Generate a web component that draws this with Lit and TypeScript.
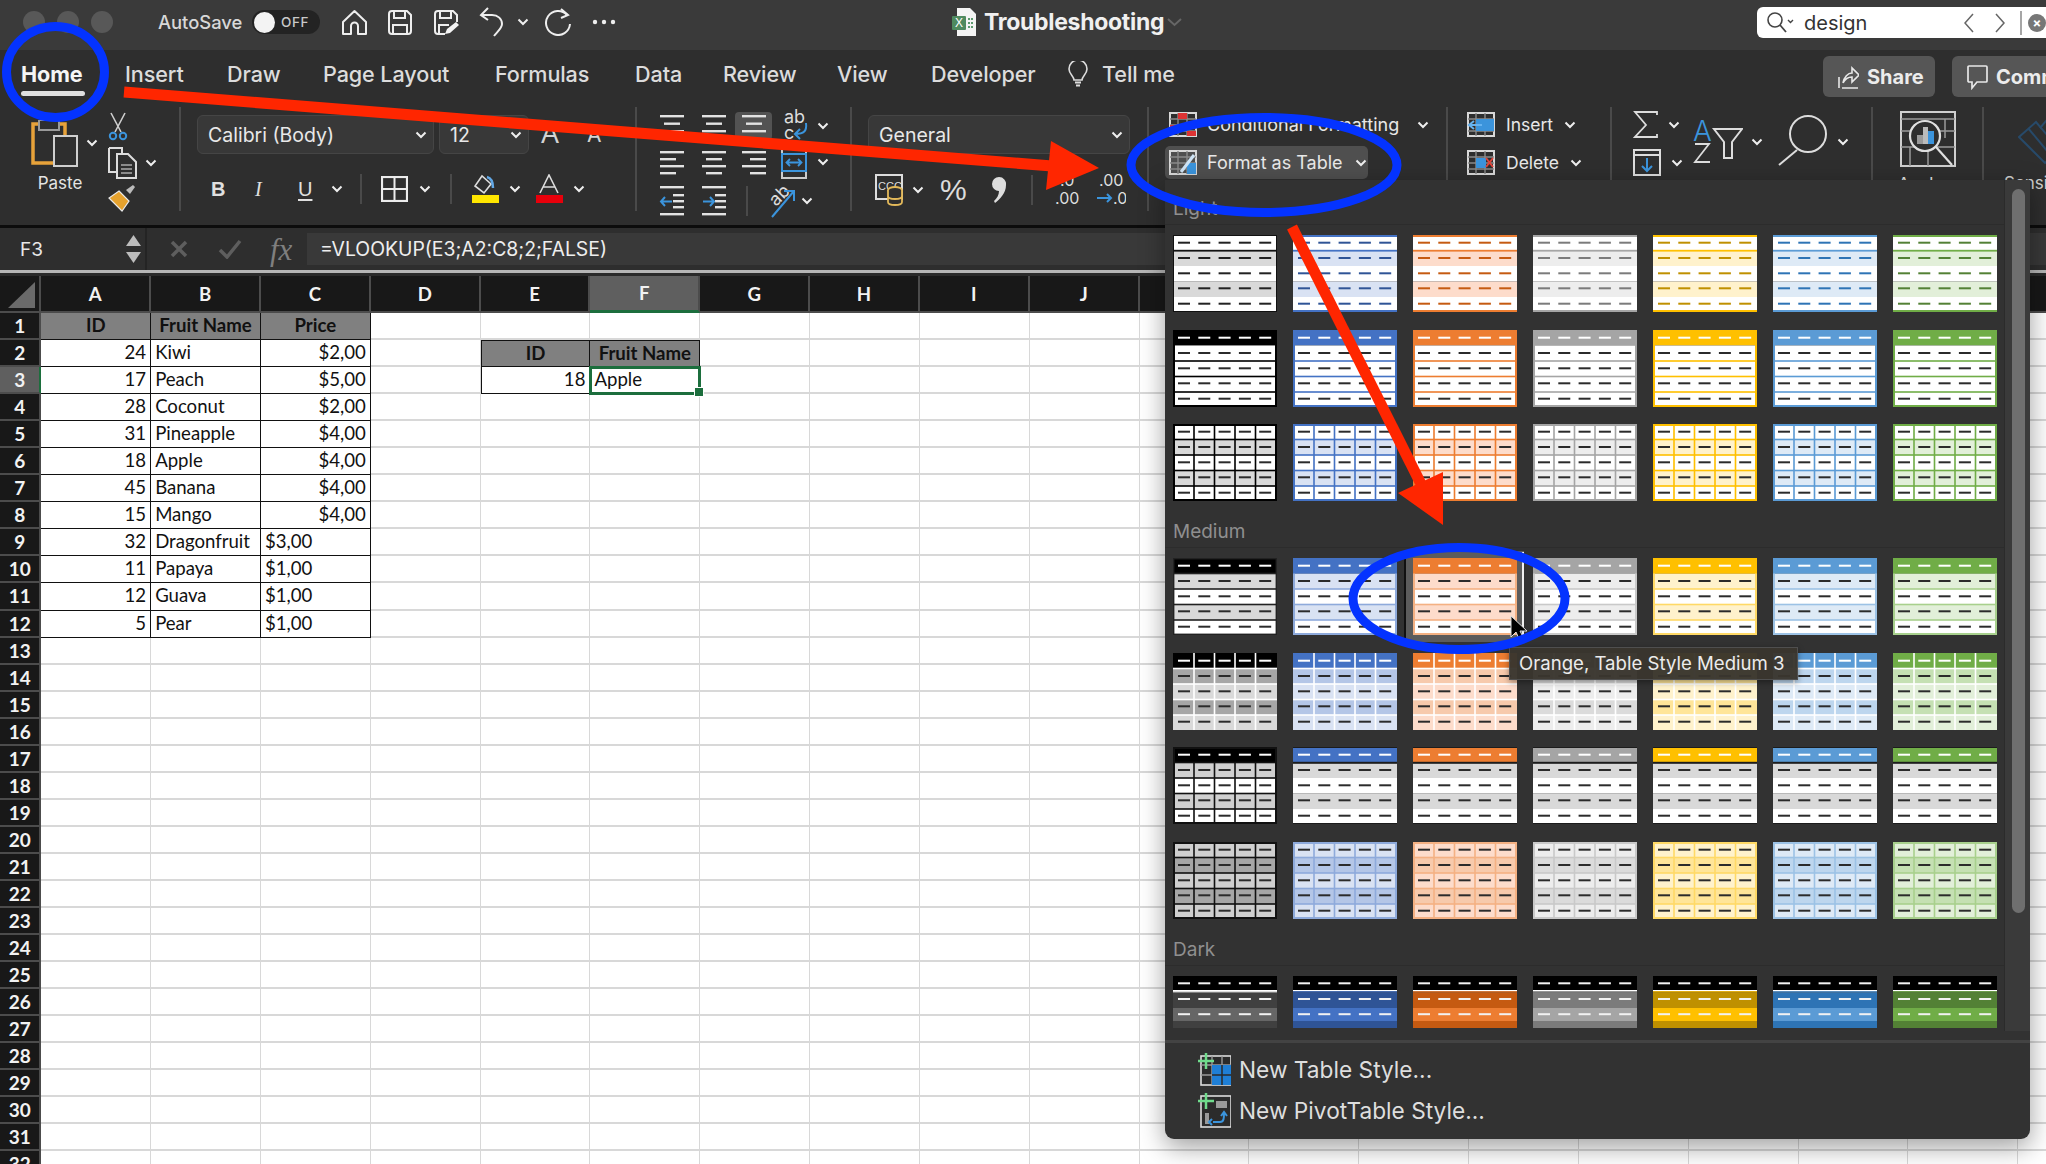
import { LitElement, html, css, svg } from "lit";
import { customElement } from "lit/decorators.js";

const W = "#e2e2e2";
const B = "#3b94dc";
const chev = html`<svg class="chev" width="12" height="8" viewBox="0 0 12 8"><path d="M1.5 1.5 6 6l4.5-4.5" fill="none" stroke="#eee" stroke-width="2"/></svg>`;

const lineIcon = (rows: [number, number][], w = 26, extra: any = null) => html`<svg width=${w} height="25" viewBox="0 0 ${w} 25">
  ${rows.map((r, i) => svg`<rect x=${r[0]} y=${1 + i * (rows.length === 3 ? 7.5 : 7)} width=${r[1]} height="2.4" fill=${W}/>`)}${extra}</svg>`;

const gridIcon = (extra: any, w = 28, h = 25) => html`<svg width=${w} height=${h} viewBox="0 0 28 25">
  <rect x="1" y="1" width="26" height="23" fill="none" stroke="#d8d8d8" stroke-width="2"/>
  <path d="M1 7h26M1 13h26M1 19h26M9 1v23M18 1v23" stroke="#8a8a8a" stroke-width="1.4"/>${extra}</svg>`;

@customElement("table-thumb")
class TableThumb extends LitElement {
  static properties = { kind: {}, idx: { type: Number } };
  kind = "L1";
  idx = 0;
  static styles = css`
    :host { display: block; width: 104px; height: 77px; }
    :host([kind="D"]) { height: 52px; }
    svg { display: block; }
  `;
  render() {
    const P = [
      ["#000000", "#000000", "#d9d9d9", "#a6a6a6", "#555555"],
      ["#4472c4", "#2f5496", "#d9e2f3", "#b4c6e7", "#8eaadb"],
      ["#ed7d31", "#c55a11", "#fddccb", "#f7caac", "#f4b183"],
      ["#a5a5a5", "#7b7b7b", "#ededed", "#dbdbdb", "#c9c9c9"],
      ["#ffc000", "#bf9000", "#fff2cc", "#ffe599", "#ffd966"],
      ["#5b9bd5", "#2e74b5", "#deeaf6", "#bdd6ee", "#9cc2e5"],
      ["#70ad47", "#538135", "#e2efd9", "#c5e0b3", "#a8d08d"],
    ][this.idx];
    const [c, dk, lt, md, ln] = P;
    const ys = [0, 15.5, 31, 46.5, 62, 77];
    const xs = [21, 41.5, 62, 82.5];
    const dy = [7.7, 23, 38.3, 53.3, 68.7];
    const dx = [5, 25.3, 45.6, 65.9, 86.2];
    const R = (x: number, y: number, w: number, h: number, f: string) => svg`<rect x=${x} y=${y} width=${w} height=${h} fill=${f}/>`;
    const dashes = (colors: string[]) =>
      dy.map((y, r) => dx.map((x) => R(x, y - 1, 12, 2, colors[r])));
    const band = (fills: string[]) => fills.map((f, i) => R(0, ys[i], 104, ys[i + 1] - ys[i], f));
    const hLines = (col: string, t = 1.6, a = 1) => ys.slice(a, 5).map((y) => R(0, y - t / 2, 104, t, col));
    const vLines = (col: string, t = 1.6, from = 0) => xs.map((x) => R(x - t / 2, from, t, 77 - from, col));
    const frame = (col: string, t = 2) => [R(0, 0, 104, t, col), R(0, 77 - t, 104, t, col), R(0, 0, t, 77, col), R(104 - t, 0, t, 77, col)];
    const k = this.kind;
    let body: any[] = [];
    const text = "#2b2b2b";
    if (k === "L1") {
      body = [band(["#fff", lt, "#fff", lt, "#fff"]), R(0, 0, 104, 2, c), R(0, 14.8, 104, 1.8, c), R(0, 75, 104, 2, c), dashes([dk, dk, dk, dk, dk])];
      if (this.idx === 0) body = [band(["#fff", lt, "#fff", lt, "#fff"]), R(0, 14.8, 104, 1.8, "#111"), frame("#111", 1), dashes(Array(5).fill("#222"))];
    } else if (k === "L2") {
      body = [band([c, "#fff", "#fff", "#fff", "#fff"]), hLines(c, 1.6, 2), frame(c), dashes(["#fff", text, text, text, text])];
    } else if (k === "L3") {
      body = [band(["#fff", lt, "#fff", lt, "#fff"]), hLines(c, 1.6), vLines(c), frame(c), dashes(Array(5).fill(text))];
    } else if (k === "M1") {
      const l = this.idx === 0 ? "#333" : ln;
      body = [band([c, lt, "#fff", lt, "#fff"]), hLines(l, 1.6, 2), frame(l), R(0, 0, 104, 15.5, c), dashes(["#fff", text, text, text, text])];
      if (this.idx === 0) body = [band([c, lt, "#fff", lt, "#fff"]), hLines("#222", 1.6, 1), frame("#222", 1.4), dashes(["#fff", text, text, text, text])];
    } else if (k === "M2") {
      body = [band([c, md, lt, md, lt]), hLines("#fff", 1.6), vLines("#fff", 1.6), dashes(["#fff", text, text, text, text])];
    } else if (k === "M3") {
      if (this.idx === 0) {
        body = [band(["#000", "#d0d0d0", "#fff", "#d0d0d0", "#fff"]), hLines("#111", 1.6), vLines("#111", 1.6, 15), frame("#111"), dashes(["#fff", text, text, text, text])];
      } else {
        body = [band([c, "#d9d9d9", "#fff", "#d9d9d9", "#fff"]), R(0, 14.8, 104, 2, "#1c1c1c"), R(0, 0, 104, 1, "#1c1c1c"), R(0, 76, 104, 1, "#1c1c1c"), dashes(["#fff", text, text, text, text])];
      }
    } else if (k === "M4") {
      if (this.idx === 0) {
        body = [band(["#cfcfcf", "#a6a6a6", "#cfcfcf", "#a6a6a6", "#cfcfcf"]), hLines("#111", 1.6), vLines("#111", 1.6), frame("#111"), dashes(Array(5).fill(text))];
      } else {
        body = [band([lt, md, lt, md, lt]), hLines(ln, 1.6), vLines(ln, 1.6), frame(ln), dashes(Array(5).fill(text))];
      }
    } else {
      const mid = this.idx === 0 ? "#666" : c;
      const dark = this.idx === 0 ? "#404040" : dk;
      const y = [7.3, 23, 38.2];
      const topLine = this.idx === 0 ? "#fff" : c;
      body = [
        R(0, 0, 104, 14, "#000"), R(0, 14, 104, 1.2, "#fff"), R(0, 15.2, 104, 1.4, topLine),
        R(0, 16.6, 104, 15.4, dark), R(0, 32, 104, 13, mid), R(0, 45, 104, 7, dark),
        y.map((yy) => dx.map((x) => R(x, yy - 1, 12, 2, "#f2f2f2"))),
      ];
    }
    const h = k === "D" ? 52 : 77;
    return html`<svg width="104" height=${h} viewBox="0 0 104 ${h}">${body}</svg>`;
  }
}

@customElement("app-root")
class AppRoot extends LitElement {
  static styles = css`
    :host {
      display: block; position: relative; width: 2046px; height: 1164px; overflow: hidden;
      background: #fff; font-family: Inter, "Liberation Sans", sans-serif; color: #e6e6e6;
    }
    svg { display: block; flex: none; }
    .chev { flex: none; }
    /* title bar */
    .titlebar { height: 50px; background: #3a3a3a; display: flex; align-items: center; padding-bottom: 6px; box-sizing: border-box; }
    .lights { display: flex; gap: 12px; margin-left: 23px; }
    .lights i { width: 22px; height: 22px; border-radius: 50%; background: #585858; }
    .autosave { margin-left: 45px; font-size: 18.4px; font-weight: 500; color: #d8d8d8; width: 94px; }
    .toggle { width: 68px; height: 24px; border-radius: 12px; background: #232323; display: flex; align-items: center; font-size: 13.5px; letter-spacing: .6px; color: #c9c9c9; font-weight: 500; }
    .toggle b { width: 21px; height: 21px; border-radius: 50%; background: #f3f3f3; margin: 0 6px 0 2px; }
    .qa { display: grid; grid-template-columns: 46px 46px 46px 38px 28px 47px 24px; margin-left: 21px; align-items: center; }
    .doc { margin-left: 336px; }
    .doctitle { margin-left: 8px; font-size: 23px; font-weight: 700; color: #f0f0f0; width: 183px; white-space: nowrap; letter-spacing: -.3px; }
    .search { margin-left: auto; width: 289px; height: 31px; background: #fff; border-radius: 6px 0 0 6px; display: flex; align-items: center; color: #333; font-size: 20px; padding-top: 1px; box-sizing: border-box; margin-top: 1px; }
    .search .q { margin-left: 9px; }
    .search .word { margin-left: 10px; width: 161px; }
    .search .nav { display: grid; grid-template-columns: 31px 25px 8px; align-items: center; }
    .search .clear { width: 18px; height: 18px; border-radius: 50%; background: #777; color: #fff; font-size: 13px; line-height: 18px; text-align: center; font-weight: 700; flex: none; }
    /* tabs */
    .tabs { height: 57px; background: #2e2e2e; display: flex; }
    .tablist { display: grid; grid-template-columns: 104px 102px 96px 172px 140px 88px 114px 94px 137px 34px auto; padding-left: 21px; align-items: start; }
    .tab { font-size: 21.6px; font-weight: 500; color: #dcdcdc; height: 46px; line-height: 48px; white-space: nowrap; letter-spacing: -.1px; }
    .tab.on { color: #f5f5f5; font-weight: 700; }
    .tab.on span { display: block; width: 64px; height: 5px; margin-top: -7px; border-radius: 3px; background: #e0e0e0; }
    .bulb { padding-top: 11px; }
    .btns { margin-left: auto; display: flex; gap: 17px; padding-top: 6px; }
    .btn { height: 41px; background: #565656; border-radius: 6px; display: flex; align-items: center; gap: 8px; font-size: 20px; font-weight: 700; color: #ececec; padding-left: 15px; box-sizing: border-box; white-space: nowrap; overflow: hidden; }
    .btn.share { width: 112px; }
    .btn.comm { width: 94px; border-radius: 6px 0 0 6px; }
    /* ribbon */
    .ribbon { height: 118px; background: #2e2e2e; display: flex; border-bottom: 3px solid #0c0c0c; box-sizing: content-box; overflow: hidden; }
    .grp { height: 104px; border-right: 2px solid #4a4a4a; box-sizing: border-box; flex: none; position: relative; }
    .g1 { width: 181px; display: grid; grid-template-columns: 77px 73px; padding-left: 31px; }
    .paste { padding-top: 13px; }
    .paste .top { display: flex; align-items: center; gap: 8px; height: 46px; }
    .paste .lb { font-size: 17px; color: #e4e4e4; text-align: center; width: 58px; margin-top: 7px; }
    .cb { display: grid; grid-template-rows: 35px 37px 34px; padding-top: 2px; align-items: center; }
    .cb div { display: flex; align-items: center; gap: 8px; }
    .g2 { width: 456px; padding-left: 16px; }
    .frow { display: flex; margin-top: 8px; align-items: center; }
    .sel { height: 39px; background: #383838; border: 1px solid #454545; border-radius: 6px; box-sizing: border-box; display: flex; align-items: center; justify-content: space-between; padding: 0 6px 0 10px; font-size: 19.5px; color: #e8e8e8; }
    .sel.font { width: 237px; }
    .sel.size { width: 90px; margin-left: 5px; }
    .bigA { font-size: 27px; color: #d4d4d4; margin-left: 12px; width: 46px; font-family: "Liberation Sans", sans-serif; }
    .smA { font-size: 21px; color: #d4d4d4; }
    .f2 { display: grid; grid-template-columns: 44px 43px 33px 29px 21px 38px 31px 21px 38px 26px 38px auto; margin-top: 20px; padding-left: 14px; align-items: center; height: 30px; }
    .fb { font-size: 20px; color: #e0e0e0; font-family: "Liberation Serif", serif; line-height: 1; }
    .fb.b { font-family: "Liberation Sans", sans-serif; font-weight: 700; }
    .fb.u { font-family: "Liberation Sans", sans-serif; text-decoration: underline; text-underline-offset: 3px; }
    .vs { width: 2px; height: 30px; background: #4a4a4a; }
    .g3 { width: 215px; display: grid; grid-auto-rows: 27px; row-gap: 10.5px; padding-top: 1px; }
    .a1 { display: grid; grid-template-columns: 22px 42px 34px 49px 33px auto; align-items: center; }
    .a2 { display: grid; grid-template-columns: 22px 42px 40px 40px 36px auto; align-items: center; }
    .a3 { display: grid; grid-template-columns: 22px 42px 45px 18px 37px auto; align-items: center; }
    .curr { width: 37px; height: 28px; background: #535353; border-radius: 4px; display: flex; justify-content: center; align-items: center; }
    .g4 { width: 297px; padding-left: 16px; }
    .g4 .sel { width: 262px; }
    .n2 { display: grid; grid-template-columns: 37px 28px 51px 40px 21px 44px auto; margin-top: 19px; padding-left: 7px; align-items: center; height: 32px; }
    .pct { font-size: 30px; font-weight: 300; color: #dcdcdc; line-height: 1; font-family: "Liberation Sans", sans-serif; }
    .g5 { width: 299px; padding-left: 20px; padding-top: 4px; }
    .st { display: flex; align-items: center; height: 27px; gap: 10px; font-size: 18px; color: #e8e8e8; white-space: nowrap; }
    .st .chev { margin-left: 8px; }
    .st.fat { height: 33px; width: 203px; background: #4f4f4f; border-radius: 5px; margin: 8px 0 0 -4px; padding-left: 4px; box-sizing: border-box; }
    .st.fat .chev { margin-left: 2px; }
    .g6 { width: 164px; padding-left: 19px; padding-top: 4px; }
    .ce { display: flex; align-items: center; height: 27px; gap: 11px; font-size: 17.5px; color: #e8e8e8; }
    .ce + .ce { margin-top: 11px; }
    .ce .chev { margin-left: 0; }
    .g7 { width: 261px; display: grid; grid-template-columns: 60px 84px 90px; padding-left: 21px; box-sizing: border-box; padding-top: 4px; }
    .ed { display: flex; align-items: center; height: 27px; gap: 10px; }
    .ed + .ed { margin-top: 11px; }
    .sort { display: flex; align-items: center; gap: 8px; height: 62px; }
    .az { margin-top: -4px; }
    .mag { margin-top: -4px; }
    .rlabel { font-size: 17px; color: #e4e4e4; white-space: nowrap; line-height: 20px; }
    .g7 .rlabel { margin-top: 6px; margin-left: 6px; }
    .g8 { width: 111px; padding: 4px 0 0 27px; }
    .g8 .rlabel { margin: 7px 0 0 -2px; }
    .g9 { padding: 7px 0 0 34px; width: 64px; border: 0; }
    .g9 .rlabel { margin: 7px 0 0 -14px; color: #d0d0d0; }
    /* formula */
    .fx { height: 42px; background: #2e2e2e; display: flex; align-items: center; }
    .name { width: 147px; height: 42px; display: flex; align-items: center; justify-content: space-between; box-sizing: border-box; padding: 0 4px 0 20px; font-size: 19px; color: #e8e8e8; border-right: 2px solid #242424; }
    .step { display: grid; row-gap: 6px; }
    .fbtn { display: grid; grid-template-columns: 48px 52px 60px; padding-left: 23px; align-items: center; width: 160px; box-sizing: border-box; }
    .fxt { font-family: "Liberation Serif", serif; font-style: italic; font-size: 31px; color: #7f7f7f; line-height: 1; }
    .input { flex: 1; height: 32px; background: #393939; display: flex; align-items: center; padding-left: 13px; font-size: 19.4px; color: #eee; }
    .splitter { height: 3px; background: #b6b6b6; }
    .gap2 { height: 3px; background: #2a2a2a; }
    /* sheet */
    .sheet { display: grid; grid-template-columns: 41.3px repeat(19, 109.83px); grid-template-rows: 37px; grid-auto-rows: 27.05px; background: #fff; font-family: Lato, "Liberation Sans", sans-serif; }
    .c { box-sizing: border-box; border-right: 1.5px solid #d8d8d8; border-bottom: 2px solid #d8d8d8; font-size: 18.6px; color: #111; padding: 0 4px; line-height: 25px; white-space: nowrap; }
    .colh, .rowh { background: #181818; color: #f2f2f2; font-weight: 700; box-sizing: border-box; display: flex; align-items: center; justify-content: center; border-right: 2px solid #4c4c4c; border-bottom: 2px solid #4c4c4c; }
    .colh { font-size: 18.6px; }
    .rowh { font-size: 19px; }
    .colh.cur { background: #5f5f5f; border-bottom: 3px solid #1c6e3d; }
    .rowh.cur { background: #5f5f5f; border-right: 2px solid #1c6e3d; }
    .corner { background: #181818; border-right: 2px solid #4c4c4c; border-bottom: 2px solid #4c4c4c; box-sizing: border-box; }
    .t { border-right: 1.5px solid #111; border-bottom: 1.5px solid #111; }
    .t.bl { border-left: 1.5px solid #111; }
    .h { background: #808080; font-weight: 700; text-align: center; color: #111; }
    .h.tp { border-top: 1.5px solid #111; }
    .r { text-align: right; }
    .cursel { outline: 3px solid #1c6e3d; outline-offset: -2px; position: relative; }
    .handle { position: absolute; right: -5px; bottom: -5px; width: 8px; height: 8px; background: #1c6e3d; border: 1px solid #fff; }
    /* popup */
    .popup { position: absolute; left: 1165px; top: 180px; width: 865px; height: 959px; background: #323232; border-radius: 0 0 9px 9px; box-shadow: 0 8px 26px rgba(0,0,0,.38); display: flex; flex-direction: column; z-index: 2; }
    .pbody { height: 851px; display: flex; overflow: hidden; }
    .gallery { flex: 1; padding-left: 8px; overflow: hidden; }
    .label { height: 45px; line-height: 60px; font-size: 19px; color: #8f8f8f; border-bottom: 1px solid #2c2c2c; margin: 0 0 10px -8px; padding-left: 8px; box-sizing: content-box; }
    .label.light { height: 44px; line-height: 57px; }
    .tg { display: grid; grid-template-columns: repeat(7, 104px); column-gap: 16px; row-gap: 17.5px; margin-bottom: 1px; }
    .th { position: relative; }
    .th.hov { box-shadow: 0 0 0 7px #5c5c5c; }
    .th.hov::after { content: ""; position: absolute; right: -7px; top: -6px; bottom: -4px; width: 2.5px; background: #f0f0f0; }
    .th.hov::before { content: ""; position: absolute; left: -9px; top: -6px; bottom: -6px; width: 2px; background: #111; }
    .scroll { width: 26px; background: #3a3a3a; border-left: 1px solid #2b2b2b; box-sizing: border-box; padding: 9px 5px 0 7px; flex: none; }
    .scroll i { display: block; height: 724px; border-radius: 7px; background: #6f6f6f; }
    .pfoot { margin-top: 9px; border-top: 3px solid #434343; padding-top: 6px; }
    .pitem { display: flex; align-items: center; height: 41px; padding-left: 33px; gap: 8px; font-size: 22.7px; color: #dedede; }
    .tip { position: absolute; left: 1509px; top: 647px; width: 289px; height: 33px; box-sizing: border-box; background: rgba(58,54,46,.97); border: 1px solid #4f4f4f; font-size: 18.6px; line-height: 31px; padding-left: 9px; color: #ececec; white-space: nowrap; z-index: 3; box-shadow: 0 2px 6px rgba(0,0,0,.4); }
    .overlay { position: absolute; left: 0; top: 0; z-index: 5; pointer-events: none; }
  `;

  titlebar() {
    return html`<div class="titlebar">
      <div class="lights"><i></i><i></i><i></i></div>
      <div class="autosave">AutoSave</div>
      <div class="toggle"><b></b>OFF</div>
      <div class="qa">
        <svg width="27" height="27" viewBox="0 0 27 27"><path d="M2 13 13.5 2 25 13v12h-8v-8a3.5 3.5 0 0 0-7 0v8H2z" fill="none" stroke="#eee" stroke-width="2" stroke-linejoin="round"/></svg>
        <svg width="26" height="27" viewBox="0 0 26 27"><path d="M2 5a3 3 0 0 1 3-3h15l4 4v16a3 3 0 0 1-3 3H5a3 3 0 0 1-3-3z" fill="none" stroke="#eee" stroke-width="2"/><path d="M7 2v7h11V2M6 25v-9h14v9" fill="none" stroke="#eee" stroke-width="2"/></svg>
        <svg width="26" height="27" viewBox="0 0 26 27"><path d="M12 25H5a3 3 0 0 1-3-3V5a3 3 0 0 1 3-3h15l4 4v7" fill="none" stroke="#eee" stroke-width="2"/><path d="M7 2v7h11V2M6 25v-9h10" fill="none" stroke="#eee" stroke-width="2"/><path d="M12 25l2-5 9-7 3 3-9 8z" fill="#f4f4f4"/></svg>
        <svg width="25" height="30" viewBox="0 0 25 30"><path d="M9 1 2 8l7 5M2 8h11c6 0 10 4 10 9 0 4-4 7-8 12" fill="none" stroke="#eee" stroke-width="2"/></svg>
        ${chev}
        <svg width="27" height="28" viewBox="0 0 27 28"><path d="M22 7A12 12 0 1 0 25 16" fill="none" stroke="#eee" stroke-width="2"/><path d="M16 1l7 6-7 3" fill="none" stroke="#eee" stroke-width="2"/></svg>
        <svg width="24" height="6" viewBox="0 0 24 6"><circle cx="3" cy="3" r="2.2" fill="#eee"/><circle cx="12" cy="3" r="2.2" fill="#eee"/><circle cx="21" cy="3" r="2.2" fill="#eee"/></svg>
      </div>
      <div class="doc"><svg width="24" height="28" viewBox="0 0 24 28"><path d="M5 0h13l6 6v22H5z" fill="#f4f4f4"/><rect x="0" y="8" width="14" height="14" rx="1" fill="#4f8a5f"/><text x="7" y="19" font-size="12" fill="#fff" text-anchor="middle" font-family="Liberation Sans">X</text><path d="M16 11h5M16 15h5M16 19h5" stroke="#5c9a6e" stroke-width="2" stroke-dasharray="2 1"/></svg></div>
      <div class="doctitle">Troubleshooting</div>
      <svg width="15" height="9" viewBox="0 0 15 9"><path d="M1 1l6.500 6L14 1" fill="none" stroke="#666" stroke-width="2"/></svg>
      <div class="search">
        <svg class="q" width="28" height="24" viewBox="0 0 28 24"><circle cx="9" cy="9" r="7" fill="none" stroke="#444" stroke-width="1.6"/><path d="M14 14l6 7" stroke="#444" stroke-width="1.8"/><path d="M22 9l2.500 2.500L27 9" fill="none" stroke="#444" stroke-width="1.4"/></svg>
        <span class="word">design</span>
        <div class="nav">
          <svg width="10" height="20" viewBox="0 0 10 20"><path d="M9 1 1 10l8 9" fill="none" stroke="#666" stroke-width="1.5"/></svg>
          <svg width="10" height="20" viewBox="0 0 10 20"><path d="M1 1l8 9-8 9" fill="none" stroke="#666" stroke-width="1.5"/></svg>
          <svg width="2" height="24" viewBox="0 0 2 24"><path d="M1 0v24" stroke="#888" stroke-width="1.5"/></svg>
        </div>
        <div class="clear">×</div>
      </div>
    </div>`;
  }

  tabs() {
    const names = ["Insert", "Draw", "Page Layout", "Formulas", "Data", "Review", "View", "Developer"];
    return html`<div class="tabs">
      <div class="tablist">
        <div class="tab on">Home<span></span></div>
        ${names.map((n) => html`<div class="tab">${n}</div>`)}
        <div class="bulb"><svg width="20" height="26" viewBox="0 0 20 26"><path d="M6 19c0-4-5-6-5-11a9 9 0 0 1 18 0c0 5-5 7-5 11z" fill="none" stroke="#ddd" stroke-width="1.6"/><path d="M7 21.500h6M8 24.500h4" stroke="#ddd" stroke-width="1.8"/></svg></div>
        <div class="tab">Tell me</div>
      </div>
      <div class="btns">
        <div class="btn share"><svg width="21" height="27" viewBox="0 0 21 27"><path d="M4 25h16M1 14v11M5 20c1-6 5-10 9-10V5l7 7-7 7v-5c-4 0-7 2-9 6z" fill="none" stroke="#e8e8e8" stroke-width="1.6"/></svg>Share</div>
        <div class="btn comm"><svg width="21" height="26" viewBox="0 0 21 26"><path d="M2 2h17a1 1 0 0 1 1 1v14a1 1 0 0 1-1 1H10l-5 6v-6H2a1 1 0 0 1-1-1V3a1 1 0 0 1 1-1z" fill="none" stroke="#e8e8e8" stroke-width="1.7"/></svg>Comments</div>
      </div>
    </div>`;
  }

  ribbon() {
    const arrowL = svg`<path d="M2 16.500h11M6 12l-4 4.500L6 21" fill="none" stroke=${B} stroke-width="2"/>`;
    const arrowR = svg`<path d="M2 16.500h11M9 12l4 4.500L9 21" fill="none" stroke=${B} stroke-width="2"/>`;
    return html`<div class="ribbon">
      <div class="grp g1">
        <div class="paste">
          <div class="top">
            <svg width="47" height="47" viewBox="0 0 47 47"><rect x="2" y="4" width="32" height="39" fill="none" stroke="#e7a23a" stroke-width="3.5"/><rect x="8" y="0" width="20" height="10" fill="#2e2e2e" stroke="#9a9a9a" stroke-width="2"/><rect x="23" y="16" width="23" height="30" fill="#2e2e2e" stroke="#cfcfcf" stroke-width="2"/></svg>
            ${chev}
          </div>
          <div class="lb">Paste</div>
        </div>
        <div class="cb">
          <div><svg width="20" height="29" viewBox="0 0 20 29"><path d="M3 1l10 19M17 1 7 20" stroke="#cfcfcf" stroke-width="1.6"/><circle cx="5" cy="24" r="3.200" fill="none" stroke=${B} stroke-width="2"/><circle cx="15" cy="24" r="3.200" fill="none" stroke=${B} stroke-width="2"/></svg></div>
          <div><svg width="29" height="32" viewBox="0 0 29 32"><path d="M1 1h13v5M1 1v24h7" fill="none" stroke="#ddd" stroke-width="2"/><path d="M9 7h11l8 8v16H9z" fill="none" stroke="#ddd" stroke-width="2"/><path d="M13 18h11M13 22h11M13 26h11" stroke="#aaa" stroke-width="1.5"/></svg>${chev}</div>
          <div><svg width="28" height="28" viewBox="0 0 28 28"><path d="M18 6 25 1l2 2-5 7z" fill="#bbb"/><path d="M11 7l10 10-7 10L1 14z" fill="#e5a22e" stroke="#e9e9e9" stroke-width="1.200"/></svg></div>
        </div>
      </div>
      <div class="grp g2">
        <div class="frow">
          <div class="sel font">Calibri (Body)${chev}</div>
          <div class="sel size">12${chev}</div>
          <div class="bigA">A</div>
          <div class="smA">A</div>
        </div>
        <div class="f2">
          <div class="fb b">B</div>
          <div class="fb"><i>I</i></div>
          <div class="fb u">U</div>
          ${chev}
          <div class="vs"></div>
          <svg width="27" height="26" viewBox="0 0 27 26"><rect x="1" y="1" width="25" height="24" fill="none" stroke="#ececec" stroke-width="2.2"/><path d="M13.500 1v24M1 13h25" stroke="#ececec" stroke-width="2"/></svg>
          ${chev}
          <div class="vs"></div>
          <svg width="29" height="30" viewBox="0 0 29 30"><path d="M11 2 4 12l9 7 7-9z" fill="none" stroke="#ddd" stroke-width="1.600"/><path d="M16 3c4 1 6 5 6 11" fill="none" stroke="#62a8e6" stroke-width="2.500"/><rect x="1" y="21" width="27" height="8" fill="#ffe600"/></svg>
          ${chev}
          <svg width="29" height="30" viewBox="0 0 29 30"><path d="M5 19 14 1l9 18M8 13h12" fill="none" stroke="#ddd" stroke-width="1.600"/><rect x="1" y="21" width="27" height="8" fill="#e8000b"/></svg>
          ${chev}
        </div>
      </div>
      <div class="grp g3">
        <div class="a1">
          <span></span>
          ${lineIcon([[1, 24], [5, 16], [1, 24]])}
          ${lineIcon([[1, 24], [5, 16], [1, 24]])}
          <div class="curr">${lineIcon([[0, 24], [4, 16], [0, 24]], 24)}</div>
          <svg width="24" height="36" viewBox="0 0 24 36"><text x="0" y="15" font-size="18" fill="#ddd" font-family="Inter">ab</text><text x="0" y="31" font-size="18" fill="#ddd" font-family="Inter">c</text><path d="M22 15c1 8-2 11-11 11m5-5-5 5 5 5" fill="none" stroke=${B} stroke-width="2"/></svg>
          ${chev}
        </div>
        <div class="a2">
          <span></span>
          ${lineIcon([[1, 24], [1, 16], [1, 24], [1, 16]])}
          ${lineIcon([[1, 24], [5, 16], [1, 24], [5, 16]])}
          ${lineIcon([[1, 24], [9, 16], [1, 24], [9, 16]])}
          <svg width="26" height="33" viewBox="0 0 26 33"><rect x="1" y="1" width="24" height="31" fill="none" stroke="#ccc" stroke-width="2"/><path d="M1 8h24M1 25h24" stroke="#ccc" stroke-width="1.600"/><rect x="1" y="8" width="24" height="17" fill="none" stroke=${B} stroke-width="2"/><path d="M6 16.500h14M9 13l-3.500 3.500L9 20M17 13l3.500 3.500L17 20" fill="none" stroke=${B} stroke-width="1.800"/></svg>
          ${chev}
        </div>
        <div class="a3">
          <span></span>
          <svg width="26" height="32" viewBox="0 0 26 32"><rect x="1" y="1" width="24" height="2.400" fill=${W}/><rect x="14" y="9" width="11" height="2.400" fill=${W}/><rect x="14" y="15" width="11" height="2.400" fill=${W}/><rect x="14" y="21" width="11" height="2.400" fill=${W}/><rect x="1" y="28" width="24" height="2.400" fill=${W}/>${arrowL}</svg>
          <svg width="26" height="32" viewBox="0 0 26 32"><rect x="1" y="1" width="24" height="2.400" fill=${W}/><rect x="14" y="9" width="11" height="2.400" fill=${W}/><rect x="14" y="15" width="11" height="2.400" fill=${W}/><rect x="14" y="21" width="11" height="2.400" fill=${W}/><rect x="1" y="28" width="24" height="2.400" fill=${W}/>${arrowR}</svg>
          <div class="vs"></div>
          <svg width="33" height="36" viewBox="0 0 33 36"><text transform="translate(12 24) rotate(-45)" font-size="18" fill="#ddd" font-family="Inter">ab</text><path d="M8 34 30 8m-10 0h10v10" fill="none" stroke=${B} stroke-width="2"/></svg>
          ${chev}
        </div>
      </div>
      <div class="grp g4">
        <div class="frow"><div class="sel">General${chev}</div></div>
        <div class="n2">
          <svg width="29" height="32" viewBox="0 0 29 32"><rect x="1" y="1" width="26" height="24" fill="#2e2e2e" stroke="#ddd" stroke-width="2"/><text x="3" y="16" font-size="11" fill="#ddd" font-family="Liberation Sans">CCC</text><ellipse cx="20" cy="16" rx="7" ry="3" fill="#2e2e2e" stroke="#e3b95a" stroke-width="1.800"/><path d="M13 16v12c0 4 14 4 14 0V16M13 22c0 4 14 4 14 0" fill="#2e2e2e" stroke="#e3b95a" stroke-width="1.800"/></svg>
          ${chev}
          <div class="pct">%</div>
          <svg width="15" height="26" viewBox="0 0 15 26"><path d="M8 0a7 7 0 0 1 7 8c0 8-6 14-11 18l-1-2c3-3 5-6 5-10a7 7 0 1 1 0-14z" fill="#ddd"/></svg>
          <div class="vs"></div>
          <svg width="30" height="34" viewBox="0 0 30 34"><text x="8" y="13" font-size="16" fill="#ddd" font-family="Inter">.0</text><text x="3" y="31" font-size="16" fill="#ddd" font-family="Inter">.00</text><path d="M13 7H1m4-4L1 7l4 4" fill="none" stroke=${B} stroke-width="2"/></svg>
          <svg width="30" height="34" viewBox="0 0 30 34"><text x="3" y="13" font-size="16" fill="#ddd" font-family="Inter">.00</text><text x="17" y="31" font-size="16" fill="#ddd" font-family="Inter">.0</text><path d="M1 25h14m-4-4 4 4-4 4" fill="none" stroke=${B} stroke-width="2"/></svg>
        </div>
      </div>
      <div class="grp g5">
        <div class="st">${gridIcon(svg`<rect x="9" y="1" width="9" height="6" fill="#d33"/><rect x="1" y="13" width="8" height="6" fill="#d33"/><rect x="18" y="19" width="9" height="5" fill="#d33"/>`)}Conditional Formatting${chev}</div>
        <div class="st fat">${gridIcon(svg`<rect x="18" y="13" width="9" height="11" fill=${B}/><path d="M12 22 25 5" stroke="#cfe4f5" stroke-width="3"/>`)}Format as Table${chev}</div>
      </div>
      <div class="grp g6">
        <div class="ce">${gridIcon(svg`<rect x="9" y="7" width="18" height="12" fill=${B}/><path d="M15 13H2m5-4-5 4 5 4" fill="none" stroke="#66b3f0" stroke-width="2"/>`)}Insert ${chev}</div>
        <div class="ce">${gridIcon(svg`<rect x="9" y="8" width="10" height="10" fill=${B}/><path d="M19 8l7 9m0-9-7 9" stroke="#e0453a" stroke-width="2"/>`)}Delete ${chev}</div>
      </div>
      <div class="grp g7">
        <div>
          <div class="ed"><svg width="25" height="28" viewBox="0 0 25 28"><path d="M24 4V1H2l11 13L2 26h22v-3" fill="none" stroke="#ddd" stroke-width="1.800"/></svg>${chev}</div>
          <div class="ed"><svg width="28" height="27" viewBox="0 0 28 27"><rect x="1" y="1" width="26" height="25" fill="none" stroke="#ddd" stroke-width="2"/><path d="M1 6h26" stroke="#ddd" stroke-width="2"/><path d="M14 9v13m-5-5 5 5 5-5" fill="none" stroke=${B} stroke-width="2"/></svg>${chev}</div>
        </div>
        <div>
          <div class="sort">
            <svg class="az" width="50" height="50" viewBox="0 0 50 50"><text x="0" y="26" font-size="28" fill=${B} font-family="Inter" font-weight="300">A</text><path d="M2 29h14L2 47h15" fill="none" stroke="#ddd" stroke-width="1.800"/><path d="M21 14h28L39 27v16h-8V27z" fill="none" stroke="#ddd" stroke-width="2"/></svg>
            ${chev}
          </div>
          <div class="rlabel">Sort &amp;</div>
        </div>
        <div>
          <div class="sort">
            <svg class="mag" width="52" height="52" viewBox="0 0 52 52"><circle cx="31" cy="20" r="18" fill="none" stroke="#ddd" stroke-width="2"/><path d="M20 36 2 51" stroke="#ddd" stroke-width="2"/></svg>
            ${chev}
          </div>
          <div class="rlabel">Find &amp;</div>
        </div>
      </div>
      <div class="grp g8">
        <svg width="56" height="56" viewBox="0 0 56 56"><rect x="1" y="1" width="54" height="54" fill="none" stroke="#cfcfcf" stroke-width="2"/><path d="M1 8h54M1 20h54M1 36h54M10 36v19M28 40v15M45 8v19" stroke="#9a9a9a" stroke-width="1.500"/><circle cx="25" cy="25" r="15" fill="#2e2e2e" stroke="#e0e0e0" stroke-width="2.200"/><path d="M36 36l16 18" stroke="#e0e0e0" stroke-width="2.200"/><rect x="17" y="24" width="6" height="9" fill="#999"/><rect x="23" y="16" width="5" height="17" fill="#bbb"/><rect x="28" y="20" width="6" height="13" fill=${B}/></svg>
        <div class="rlabel">Analyze</div>
      </div>
      <div class="grp g9">
        <svg width="52" height="52" viewBox="0 0 52 52"><path d="M1 23 18 8l24 28-15 13zM10 14l20 24" fill="none" stroke="#274a6a" stroke-width="2"/><path d="M22 14 34 0l14 12" fill="none" stroke="#274a6a" stroke-width="2"/></svg>
        <div class="rlabel">Sensitivity</div>
      </div>
    </div>`;
  }

  formula() {
    return html`<div class="fx">
      <div class="name">F3
        <div class="step">
          <svg width="15" height="11" viewBox="0 0 15 11"><path d="M7.500 0 15 11H0z" fill="#bdbdbd"/></svg>
          <svg width="15" height="11" viewBox="0 0 15 11"><path d="M7.500 11 15 0H0z" fill="#bdbdbd"/></svg>
        </div>
      </div>
      <div class="fbtn">
        <svg width="18" height="18" viewBox="0 0 18 18"><path d="M2 2l14 14M16 2 2 16" stroke="#5e5e5e" stroke-width="3.500"/></svg>
        <svg width="24" height="20" viewBox="0 0 24 20"><path d="M2 11l7 7L22 2" fill="none" stroke="#5e5e5e" stroke-width="3.500"/></svg>
        <div class="fxt">fx</div>
      </div>
      <div class="input">=VLOOKUP(E3;A2:C8;2;FALSE)</div>
    </div>
    <div class="splitter"></div>
    <div class="gap2"></div>`;
  }

  sheet() {
    const cols = "ABCDEFGHIJKLMNOPQRS".split("");
    const fruits: [number, string, string, boolean][] = [
      [24, "Kiwi", "$2,00", true], [17, "Peach", "$5,00", true], [28, "Coconut", "$2,00", true],
      [31, "Pineapple", "$4,00", true], [18, "Apple", "$4,00", true], [45, "Banana", "$4,00", true],
      [15, "Mango", "$4,00", true], [32, "Dragonfruit", "$3,00", false], [11, "Papaya", "$1,00", false],
      [12, "Guava", "$1,00", false], [5, "Pear", "$1,00", false],
    ];
    const cell = (r: number, c: number) => {
      if (r === 1 && c < 3) return html`<div class="c t h">${["ID", "Fruit Name", "Price"][c]}</div>`;
      if (r >= 2 && r <= 12 && c < 3) {
        const f = fruits[r - 2];
        if (c === 0) return html`<div class="c t r">${f[0]}</div>`;
        if (c === 1) return html`<div class="c t">${f[1]}</div>`;
        return html`<div class="c t ${f[3] ? "r" : ""}">${f[2]}</div>`;
      }
      if (r === 2 && c === 4) return html`<div class="c t h bl tp">ID</div>`;
      if (r === 2 && c === 5) return html`<div class="c t h tp">Fruit Name</div>`;
      if (r === 3 && c === 4) return html`<div class="c t r bl">18</div>`;
      if (r === 3 && c === 5) return html`<div class="c cursel">Apple<span class="handle"></span></div>`;
      return html`<div class="c"></div>`;
    };
    const rows = Array.from({ length: 32 }, (_, i) => i + 1);
    return html`<div class="sheet">
      <div class="corner"><svg width="38" height="34" viewBox="0 0 38 34"><path d="M8 32 35 6v26z" fill="#6a6a6a"/></svg></div>
      ${cols.map((c) => html`<div class="colh ${c === "F" ? "cur" : ""}">${c}</div>`)}
      ${rows.map((r) => html`<div class="rowh ${r === 3 ? "cur" : ""}">${r}</div>${cols.map((_, c) => cell(r, c))}`)}
    </div>`;
  }

  popup() {
    const seven = [0, 1, 2, 3, 4, 5, 6];
    const row = (k: string, hover = -1) => seven.map((i) => html`<div class="th ${i === hover ? "hov" : ""}"><table-thumb kind=${k} idx=${i}></table-thumb></div>`);
    return html`<div class="popup">
      <div class="pbody">
        <div class="gallery">
          <div class="label light">Light</div>
          <div class="tg">${row("L1")}${row("L2")}${row("L3")}</div>
          <div class="label">Medium</div>
          <div class="tg">${row("M1", 2)}${row("M2")}${row("M3")}${row("M4")}</div>
          <div class="label">Dark</div>
          <div class="tg">${row("D")}</div>
        </div>
        <div class="scroll"><i></i></div>
      </div>
      <div class="pfoot">
        <div class="pitem"><svg width="33" height="33" viewBox="0 0 33 33"><rect x="3" y="3" width="30" height="29" fill="#2b2b2b" stroke="#ddd" stroke-width="1.600"/><path d="M3 12h30M3 22h30M14 3v29M24 3v29" stroke="#999" stroke-width="1.400"/><rect x="14" y="12" width="19" height="20" fill="#1f7fd6"/><path d="M14 22h19M24 12v20" stroke="#2b2b2b" stroke-width="1.500"/><path d="M8 0v16M0 8h16" stroke="#6fdc8c" stroke-width="2.500"/></svg>New Table Style...</div>
        <div class="pitem"><svg width="33" height="35" viewBox="0 0 33 35"><rect x="3" y="3" width="30" height="31" fill="#2b2b2b" stroke="#ddd" stroke-width="1.600"/><rect x="18" y="8" width="11" height="7" fill="#999"/><rect x="7" y="20" width="4" height="11" fill="#999"/><path d="M15 29h7c4 0 4-4 4-9m-3 3 3-4 3 4m-15 3-3 3 3 3" fill="none" stroke="#3b94dc" stroke-width="2"/><path d="M8 0v16M0 8h16" stroke="#6fdc8c" stroke-width="2.500"/></svg>New PivotTable Style...</div>
      </div>
    </div>
    <div class="tip">Orange, Table Style Medium 3</div>`;
  }

  overlay() {
    const red = "#ff2600";
    const blue = "#0433ff";
    return html`<svg class="overlay" width="2046" height="1164" viewBox="0 0 2046 1164">
      <path d="M1511 616v21l5-5 4 9 4-2-4-8h7z" fill="#000" stroke="#ddd" stroke-width="1"/>
      <path d="M124 92 1052 166" stroke=${red} stroke-width="11" fill="none"/>
      <path d="M1051 141 1099 168 1046 190z" fill=${red}/>
      <path d="M1292 227 1424 490" stroke=${red} stroke-width="11" fill="none"/>
      <path d="M1443 472V525L1398 493z" fill=${red}/>
      <ellipse cx="55.500" cy="72" rx="49" ry="45.500" fill="none" stroke=${blue} stroke-width="9"/>
      <ellipse cx="1264" cy="165" rx="133" ry="47.500" fill="none" stroke=${blue} stroke-width="9"/>
      <ellipse cx="1459" cy="598.500" rx="106" ry="51" fill="none" stroke=${blue} stroke-width="9"/>
    </svg>`;
  }

  render() {
    return html`${this.titlebar()}${this.tabs()}${this.ribbon()}${this.formula()}${this.sheet()}${this.popup()}${this.overlay()}`;
  }
}
